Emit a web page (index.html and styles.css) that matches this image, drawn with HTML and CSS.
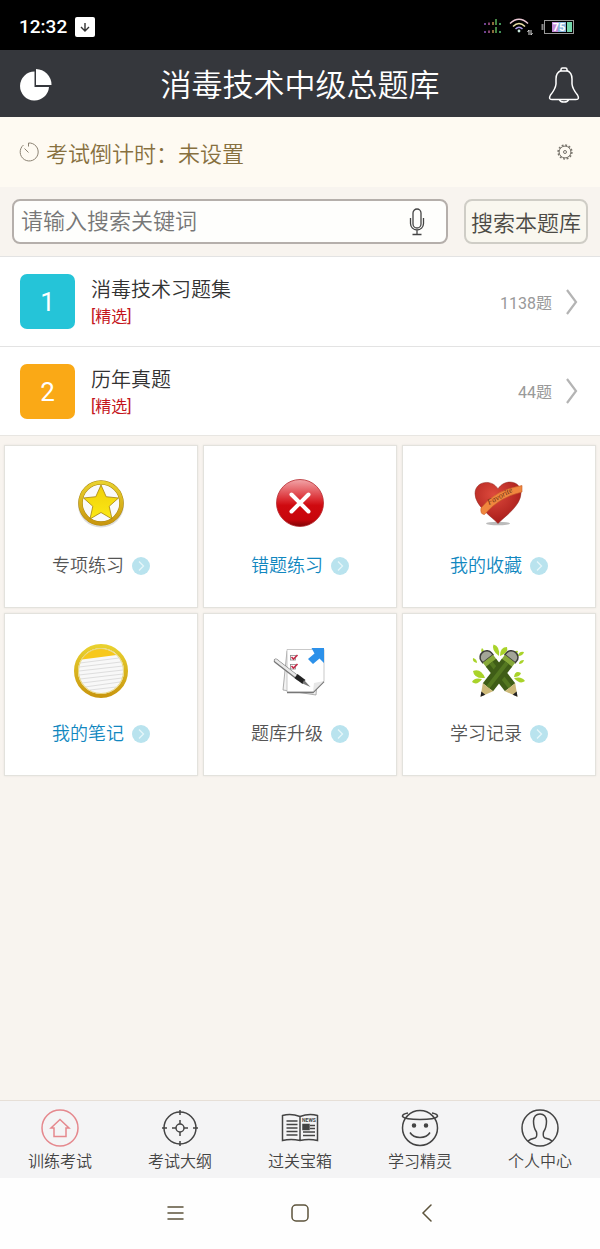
FILE: index.html
```
<!DOCTYPE html>
<html lang="zh-CN">
<head>
  <meta charset="UTF-8" />
  <meta name="viewport" content="width=device-width, initial-scale=1.0"/>
  <title>消毒技术中级总题库</title>
  <link rel="stylesheet" href="styles.css">
</head>
<body>

  <svg width="0" height="0" class="defs" aria-hidden="true">
    <defs>
      <linearGradient id="gold" x1="0" y1="0" x2="0" y2="1">
        <stop offset="0" stop-color="#e9d12e"/><stop offset="1" stop-color="#c9970f"/>
      </linearGradient>
      <linearGradient id="star" x1="0" y1="0" x2="0" y2="1">
        <stop offset="0" stop-color="#f0cf08"/><stop offset="1" stop-color="#fbe916"/>
      </linearGradient>
      <linearGradient id="red" x1="0" y1="0" x2="0" y2="1">
        <stop offset="0" stop-color="#f2a5a8"/><stop offset="0.45" stop-color="#d9252b"/>
        <stop offset="0.55" stop-color="#cf0a10"/><stop offset="0.85" stop-color="#c8060c"/><stop offset="1" stop-color="#7d0305"/>
      </linearGradient>
      <radialGradient id="heart" cx="0.4" cy="0.3" r="0.7">
        <stop offset="0" stop-color="#dd4a3c"/><stop offset="1" stop-color="#a81c1a"/>
      </radialGradient>
      <symbol id="go" viewBox="0 0 18 18">
        <circle cx="9" cy="9" r="9" fill="#b9e3ee"/>
        <path d="M7 4.500l4.500 4.500-4.500 4.500" fill="none" stroke="#e6f6fa" stroke-width="1.300"/>
      </symbol>
      <symbol id="chevron" viewBox="0 0 14 26">
        <path d="M2 1l9 12-9 12" fill="none" stroke="#b4b4b4" stroke-width="2.200"/>
      </symbol>
      <g id="pencil">
        <path d="M21.500 12V9.500a6.500 6 0 0 1 13 0V12z" fill="#a3a598" stroke="#3c3c38" stroke-width="1.500"/>
        <path d="M21.500 12h13v6h-13z" fill="#86a839"/>
        <path d="M21.500 17h13v31h-13z" fill="#3f5d17"/>
        <path d="M26 17h4v31h-4z" fill="#547821"/>
        <path d="M21.500 48h13L28 60z" fill="#cdb979"/>
        <path d="M25.500 55.500h5L28 60z" fill="#222"/>
      </g>
    </defs>
  </svg>

  <div class="status">
    <span class="clock">12:32</span>
    <svg width="20" height="20" viewBox="0 0 20 20">
      <rect width="20" height="20" rx="2" fill="#fff"/>
      <path d="M10 6v8M6 10l4 4 4-4" fill="none" stroke="#333" stroke-width="1.400"/>
    </svg>
    <svg class="signal" width="17" height="16" viewBox="0 0 17 16" stroke-width="1.300">
      <path d="M1 4v2M1 12v2" stroke="#a6d"/>
      <path d="M5 3.500v2.500M5 11.500v2.500" stroke="#c6a"/>
      <path d="M9 3v3M9 11v3" stroke="#d9a05a"/>
      <path d="M12 0v6M12 8v6" stroke="#6c6"/>
      <path d="M16 4v2M16 12v2" stroke="#6d8"/>
    </svg>
    <svg class="wifi" width="24" height="18" viewBox="0 0 24 18" fill="none" stroke-width="1.500">
      <path d="M1 5.500Q10-3 19 5.500" stroke="#ecc9d5"/>
      <path d="M4 8.500Q10 2.500 16 8.500" stroke="#e9dfa6"/>
      <path d="M6.500 11Q10 7.500 13.500 11" stroke="#ab9be8"/>
      <circle cx="10" cy="13" r="1.400" fill="#c8e6dc"/>
      <path d="M20 12v5M22 12v5M18.500 14l1.500-2M22 17l1.500-2" stroke="#ddd" stroke-width="1"/>
    </svg>
    <svg width="34" height="16" viewBox="0 0 34 16">
      <path d="M1.500 5v6" stroke="#888" stroke-width="2"/>
      <rect x="3.500" y="1.500" width="29" height="13" fill="#000" stroke="#999"/>
      <rect x="11" y="3" width="6" height="10" fill="#c48bd8"/>
      <rect x="17" y="3" width="8" height="10" fill="#86b4dc"/>
      <rect x="26" y="3" width="5" height="10" fill="#75d8ad"/>
      <text x="18" y="12" class="battery-text" text-anchor="middle">75</text>
    </svg>
  </div>

  <header>
    <button class="icon-btn" aria-label="统计">
      <svg width="32" height="32" viewBox="0 0 32 32" fill="#fff">
        <path d="M14.500 2.500a14.500 14.500 0 1 0 14.500 15.500H14.500z"/>
        <path d="M16 0a16 16 0 0 1 15.500 16H16z"/>
      </svg>
    </button>
    <h1>消毒技术中级总题库</h1>
    <button class="icon-btn" aria-label="通知">
      <svg width="32" height="36" viewBox="0 0 32 36" fill="none" stroke="#fff" stroke-width="1.500">
        <path d="M13 3.500Q8 5.500 8 12v5Q7.500 22 2.500 28Q0 32.500 4 32.500H28Q32 32.500 29.500 28Q24.500 22 24 17v-5Q24 5.500 19 3.500"/>
        <path d="M13 4V2.500Q13 1 14.500 1h3Q19 1 19 2.500V4zM11.500 32.500Q12 35 16 35t4.500-2.500"/>
      </svg>
    </button>
  </header>

  <section class="countdown">
    <svg width="20" height="20" viewBox="0 0 20 20" fill="none" stroke="#8b8272" stroke-width="1">
      <path d="M4.500 3A9 9 0 1 0 9.500 1v3.500M9.500 10.500L5.500 6.500"/>
    </svg>
    <span>考试倒计时：未设置</span>
    <button class="icon-btn" aria-label="设置">
      <svg width="16" height="16" viewBox="0 0 16 16" fill="none" stroke="#77736b">
        <circle cx="8" cy="8" r="5.900"/>
        <circle cx="8" cy="8" r="6.900" stroke-width="1.500" stroke-dasharray="1.900 1.713"/>
        <circle cx="8" cy="8" r="1.500"/>
      </svg>
    </button>
  </section>

  <form class="search">
    <div class="search-box">
      <input type="text" placeholder="请输入搜索关键词" aria-label="请输入搜索关键词" />
      <button type="button" class="icon-btn" aria-label="语音输入">
        <svg width="16" height="28" viewBox="0 0 16 28" fill="none" stroke="#444" stroke-width="1.300">
          <rect x="4" y="1" width="8" height="19" rx="4"/>
          <path d="M1.500 10v5.500a6.500 6.500 0 0 0 13 0V10M8 22v4M3.500 26.500h9"/>
        </svg>
      </button>
    </div>
    <button type="submit">搜索本题库</button>
  </form>

  <section class="list">
    <a class="row" href="#set1">
      <span class="num cyan">1</span>
      <span class="info">
        <span class="name">消毒技术习题集</span>
        <span class="tag">[精选]</span>
      </span>
      <span class="count">1138题</span>
      <svg width="14" height="26"><use href="#chevron"/></svg>
    </a>
    <a class="row" href="#set2">
      <span class="num orange">2</span>
      <span class="info">
        <span class="name">历年真题</span>
        <span class="tag">[精选]</span>
      </span>
      <span class="count">44题</span>
      <svg width="14" height="26"><use href="#chevron"/></svg>
    </a>
  </section>

  <main class="grid">
    <a class="card" href="#special">
      <svg class="pic" width="56" height="56" viewBox="0 0 56 56">
        <ellipse cx="28" cy="30" rx="23" ry="22.500" fill="#bbb" opacity="0.500"/>
        <circle cx="28" cy="28" r="20.500" fill="#fafafa" stroke="#a98612" stroke-width="4.500"/>
        <circle cx="28" cy="28" r="20.500" fill="none" stroke="url(#gold)" stroke-width="3.500"/>
        <path d="M28 10l5.200 11.700 12.300 1.300-9.300 8.300 2.800 12.700L28 37.500 17 44l2.800-12.700L10.500 23l12.300-1.300z" fill="url(#star)" stroke="#a5820b" stroke-width="0.800"/>
      </svg>
      <span class="label">专项练习<svg width="18" height="18"><use href="#go"/></svg></span>
    </a>
    <a class="card active" href="#wrong">
      <svg class="pic" width="56" height="56" viewBox="0 0 56 56">
        <circle cx="28" cy="28" r="23.500" fill="url(#red)" stroke="#b52a2e" stroke-width="0.800"/>
        <path d="M19.500 19.500l17 17M36.500 19.500l-17 17" stroke="#fff" stroke-width="4" stroke-linecap="round"/>
      </svg>
      <span class="label">错题练习<svg width="18" height="18"><use href="#go"/></svg></span>
    </a>
    <a class="card active" href="#favorite">
      <svg class="pic" width="56" height="56" viewBox="0 0 56 56">
        <ellipse cx="27" cy="48.500" rx="12" ry="1.800" fill="#bbb"/>
        <path d="M27 48.500C21 42 4 31 4 18.500C4 6 21 3.500 27 14C33 3.500 50 5 50 18C50 31 33 42 27 48.500z" fill="url(#heart)" stroke="#8e2a22" stroke-width="0.500"/>
        <path d="M10 33Q24 15 51 10.500V17Q28 22 13.500 39.500Q9 39.500 10 33z" fill="#f0873e" stroke="#c8602a" stroke-width="0.600"/>
        <text x="18" y="30" transform="rotate(-29 18 30)" class="ribbon-text">Favorite</text>
      </svg>
      <span class="label">我的收藏<svg width="18" height="18"><use href="#go"/></svg></span>
    </a>
    <a class="card active" href="#notes">
      <svg class="pic" width="56" height="56" viewBox="0 0 56 56">
        <circle cx="28" cy="28" r="25" fill="#f8f8f8" stroke="url(#gold)" stroke-width="4"/>
        <path d="M8.500 16A23 23 0 0 1 43.500 12L9 16.500z" fill="#f7c81c"/>
        <path d="M7 20l39-5M6 24l42-5M6 28l44-5M6 32l44-5M7 36l43-5M9 40l40-5M12 44l35-5M17 47l26-3" stroke="#dedede" fill="none"/>
        <circle cx="28" cy="28" r="22.500" fill="none" stroke="#e8d67c"/>
      </svg>
      <span class="label">我的笔记<svg width="18" height="18"><use href="#go"/></svg></span>
    </a>
    <a class="card" href="#upgrade">
      <svg class="pic" width="56" height="56" viewBox="0 0 56 56">
        <path d="M15 8l32 3-3 41-33-5z" fill="#f2f2f2" stroke="#999" stroke-width="0.800"/>
        <path d="M15 6.500h37V38L41 49H15z" fill="#fff" stroke="#bbb" stroke-width="0.800"/>
        <path d="M15 49.500h26l11-11" fill="none" stroke="#777" stroke-width="1.500"/>
        <path d="M41 49l1-9 10-2z" fill="#e7e7e7"/>
        <path d="M52 5v15l-4.500-4.500L41 21l-5-5 6.500-5.500L39.500 5z" fill="#2c91ea"/>
        <g fill="#fff" stroke="#888" stroke-width="0.800"><rect x="18.500" y="12.500" width="5" height="4.500"/><rect x="18.500" y="21.500" width="5" height="4.500"/></g>
        <path d="M19.500 14l2 2 4-4M19.500 23l2 2 4-4" fill="none" stroke="#c62a48" stroke-width="1.600"/>
        <path d="M4 18L26 35" stroke="#777" stroke-width="4.500" stroke-linecap="round"/>
        <path d="M4 17.500L26 34.500" stroke="#e9e9e9" stroke-width="2.800" stroke-linecap="round"/>
        <path d="M24 33l8 6" stroke="#222" stroke-width="5"/>
        <path d="M32 37l6.500 7-8-3.500z" fill="#777"/>
      </svg>
      <span class="label">题库升级<svg width="18" height="18"><use href="#go"/></svg></span>
    </a>
    <a class="card" href="#records">
      <svg class="pic" width="56" height="56" viewBox="0 0 56 56">
        <g fill="#a9d32a">
          <path d="M28 13Q20 7 22.500 1.500Q29 3 28 13zM29 13Q29 4 36 4Q38 10 29 13z"/>
          <path d="M12 11Q9 8 11 5Q14 7 12 11zM6 20Q1 19 2 15Q6 16 6 20zM14 35Q3 36 2 28Q10 25 14 35zM11 36Q6 43 1 39Q3 34 11 36z"/>
          <path d="M47 13Q48 8 53 9Q52 13 47 13zM44 10Q44 7 47 8Q47 11 44 10zM48 21Q48 17 53 17Q52 21 48 21zM43 34Q44 27 50 30Q49 34 43 34zM43 35Q51 33 54 38Q49 42 43 35z"/>
        </g>
        <use href="#pencil" transform="rotate(-38 28 30)"/>
        <use href="#pencil" transform="rotate(38 28 30)"/>
      </svg>
      <span class="label">学习记录<svg width="18" height="18"><use href="#go"/></svg></span>
    </a>
  </main>

  <nav class="tabs">
    <a class="current" href="#exam">
      <svg width="38" height="38" viewBox="0 0 38 38">
        <circle cx="19" cy="19" r="18"/>
        <path d="M19 10.500l9 8.500h-3v8.500H13V19h-3z"/>
      </svg>
      训练考试
    </a>
    <a href="#outline">
      <svg width="38" height="38" viewBox="0 0 38 38">
        <circle cx="19" cy="19" r="16"/>
        <circle cx="19" cy="19" r="4"/>
        <path d="M19 1v5M19 32v5M1 19h5M32 19h5M19 11v4M19 23v4M11 19h4M23 19h4"/>
      </svg>
      考试大纲
    </a>
    <a href="#treasure">
      <svg width="38" height="38" viewBox="0 0 38 38">
        <path d="M19 7.500Q10 4 1.500 6.500V31.500Q10 29.500 19 31.500Q28 29.500 36.500 31.500V6.500Q28 4 19 7.500zM19 7.500v24"/>
        <path d="M5.500 12h11M5.500 15.500h11M5.500 19h11M5.500 22.500h11M5.500 26h11M29 16.500h5M29 19.500h5M22 23h12M22 26.500h12"/>
        <path d="M22 15.500h6v5h-6z" fill="#444"/>
        <text x="28" y="13" text-anchor="middle" class="news-text">NEWS</text>
      </svg>
      过关宝箱
    </a>
    <a href="#elf">
      <svg width="38" height="38" viewBox="0 0 38 38">
        <circle cx="19" cy="19" r="17.500"/>
        <path d="M7 4Q1 5 1.500 7.500Q4 10.500 19 10.500T36.500 7.500Q37 5 31 4"/>
        <circle cx="13" cy="16.500" r="1.500" fill="#444"/>
        <circle cx="25" cy="16.500" r="1.500" fill="#444"/>
        <path d="M9 23.500Q12 28.500 19 28.500T29 23.500"/>
      </svg>
      学习精灵
    </a>
    <a href="#me">
      <svg width="38" height="38" viewBox="0 0 38 38">
        <circle cx="19" cy="19" r="18"/>
        <path d="M7 32Q9 30 14 29Q16.500 28 15.500 23Q12.500 19 12.500 12Q13 5 19 5T25.500 12Q25.500 19 22.500 23Q21.500 28 24 29Q29 30 31 32"/>
      </svg>
      个人中心
    </a>
  </nav>

  <div class="system-nav">
    <button class="icon-btn" aria-label="菜单">
      <svg width="18" height="18" viewBox="0 0 18 18"><path d="M2 3h15M2 9h15M2 15h15"/></svg>
    </button>
    <button class="icon-btn" aria-label="主屏幕">
      <svg width="18" height="18" viewBox="0 0 18 18"><rect x="1" y="1" width="16" height="16" rx="4"/></svg>
    </button>
    <button class="icon-btn" aria-label="返回">
      <svg width="18" height="18" viewBox="0 0 18 18"><path d="M15 1L7 9l8 8"/></svg>
    </button>
  </div>

</body>
</html>
```
FILE: styles.css
```
* {
  box-sizing: border-box;
}
body {
  font-family: Roboto, "Noto Sans CJK SC", sans-serif;
  font-weight: 350;
  margin: 0;
  min-height: 100vh;
  display: flex;
  flex-direction: column;
  background: #f8f4ef;
  color: #333;
}
svg {
  display: block;
  flex: none;
}
a {
  color: inherit;
  text-decoration: none;
}
button,
input {
  font: inherit;
}
.defs {
  position: absolute;
}
.icon-btn {
  padding: 0;
  border: none;
  background: none;
  cursor: pointer;
}
.status {
  height: 50px;
  padding: 3px 25px 0 19px;
  display: flex;
  align-items: center;
  gap: 8px;
  background: #000;
  color: #fff;
}
.clock {
  font-size: 19px;
  font-weight: 500;
}
.signal {
  margin-left: auto;
}
.battery-text {
  font: bold 11px Roboto, sans-serif;
  fill: #fff;
}
header {
  height: 67px;
  padding: 2px 20px 0;
  display: flex;
  align-items: center;
  justify-content: space-between;
  background: #35373c;
  color: #fff;
}
h1 {
  margin: 0;
  padding-bottom: 5px;
  font-size: 31px;
  font-weight: 350;
}
.countdown {
  height: 70px;
  padding: 0 27px 0 19px;
  display: flex;
  align-items: center;
  gap: 7px;
  background: #fefaf2;
  color: #87703f;
  font-size: 22px;
}
.countdown .icon-btn {
  margin-left: auto;
}
.search {
  margin: 0;
  padding: 12px;
  display: flex;
  gap: 16px;
}
.search-box {
  flex: 1;
  min-width: 0;
  height: 45px;
  padding: 0 21px 0 7px;
  display: flex;
  align-items: center;
  background: #fefefc;
  border: 2px solid #b5afab;
  border-radius: 8px;
}
.search-box input {
  flex: 1;
  min-width: 0;
  padding: 0;
  border: none;
  outline: none;
  background: none;
  font-size: 22px;
}
.search-box input::placeholder {
  color: #777;
}
.search > button {
  height: 45px;
  padding: 0 5px 2px;
  border: 2px solid #cfcdc6;
  border-radius: 8px;
  background: #f9f7ef;
  color: #4c4a45;
  font-size: 22px;
}
.row {
  height: 90px;
  padding: 0 21px 0 20px;
  display: flex;
  align-items: center;
  background: #fff;
  border-top: 1px solid #e3e3e3;
}
.row:last-child {
  border-bottom: 1px solid #e8e6e2;
}
.num {
  width: 55px;
  height: 55px;
  border-radius: 7px;
  color: #fff;
  font-size: 26px;
  font-weight: 400;
  line-height: 56px;
  text-align: center;
}
.cyan {
  background: #25c4d8;
}
.orange {
  background: #faa916;
}
.info {
  flex: 1;
  margin-left: 16px;
  padding-top: 3px;
}
.name,
.tag {
  display: block;
}
.name {
  font-size: 20px;
  line-height: 28px;
}
.tag {
  font-size: 16px;
  line-height: 26px;
  color: #c4151c;
  font-weight: 400;
}
.count {
  margin-right: 13px;
  font-size: 16px;
  font-weight: 400;
  color: #999;
}
.grid {
  flex: 1;
  padding: 9px 4px;
  display: grid;
  grid-template-columns: repeat(3, 1fr);
  align-content: start;
  gap: 5px;
}
.card {
  padding: 29px 0 27px;
  display: flex;
  flex-direction: column;
  align-items: center;
  gap: 21px;
  background: #fff;
  border: 1px solid #e3e2dd;
  box-shadow: 0 0 2px #e6e4de;
  color: #555;
}
.label {
  display: flex;
  align-items: center;
  gap: 8px;
  font-size: 18px;
  line-height: 28px;
}
.ribbon-text {
  font: italic 8px "Liberation Serif", serif;
  fill: #6b2d14;
}
.active {
  color: #1187bf;
}
.tabs {
  height: 78px;
  padding-top: 8px;
  display: flex;
  background: #f4f4f5;
  border-top: 1px solid #e6dfd7;
}
.tabs a {
  flex: 1;
  display: flex;
  flex-direction: column;
  align-items: center;
  gap: 2px;
  font-size: 16px;
  line-height: 26px;
  color: #444;
}
.tabs svg {
  fill: none;
  stroke: #444;
  stroke-width: 1.500px;
}
.tabs .current svg {
  stroke: #e5888d;
}
.tabs .news-text {
  font: bold 5px Roboto, sans-serif;
  fill: #444;
  stroke: none;
}
.system-nav {
  height: 71px;
  padding-bottom: 2px;
  display: flex;
  align-items: center;
  justify-content: center;
  gap: 107px;
  background: #fefefe;
}
.system-nav svg {
  fill: none;
  stroke: #5c533b;
  stroke-width: 1.500px;
  stroke-linecap: round;
}
```
